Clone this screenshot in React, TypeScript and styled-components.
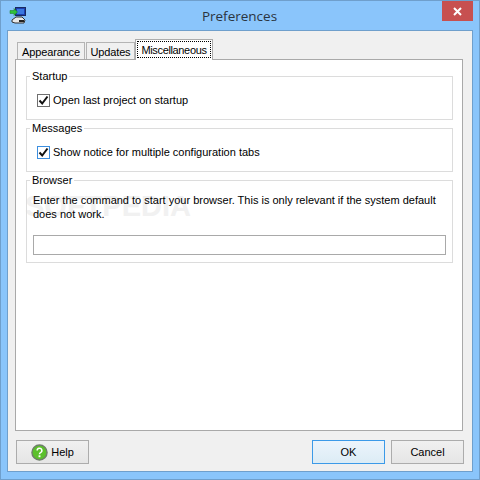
import styled, { createGlobalStyle } from "styled-components";

const GlobalStyle = createGlobalStyle`
  html, body {
    margin: 0;
    padding: 0;
    background: #8ac5fb;
  }
  * {
    box-sizing: border-box;
  }
`;

const FONT = `"Liberation Sans", Arial, sans-serif`;

const Window = styled.div`
  width: 480px;
  height: 480px;
  background: #8ac5fb;
  border: 1px solid #6f9fcc;
  display: flex;
  flex-direction: column;
  font-family: ${FONT};
  font-size: 11px;
  color: #000;
`;

const TitleBar = styled.div`
  height: 29px;
  flex: none;
  display: flex;
  align-items: flex-start;
  padding-left: 8px;
`;

const AppIcon = styled.svg`
  width: 18px;
  height: 18px;
  margin-top: 5px;
  flex: none;
`;

const Title = styled.div`
  flex: 1;
  text-align: center;
  font-family: "Open Sans", sans-serif;
  font-size: 13.5px;
  line-height: 30px;
  color: #2a3440;
  padding-left: 10px;
`;

const CloseButton = styled.div`
  width: 31px;
  height: 20px;
  margin-right: 6px;
  background: #c75050;
  display: flex;
  align-items: center;
  justify-content: center;
`;

const Client = styled.div`
  flex: 1;
  margin: 0 6px 7px 6px;
  background: #f0f0f0;
  border: 1px solid #6f9fcc;
  padding: 11px 8px 7px 7px;
  display: flex;
  flex-direction: column;
`;

const TabRow = styled.div`
  height: 17px;
  flex: none;
  display: flex;
  align-items: flex-end;
  padding-left: 2px;
  gap: 1px;
  position: relative;
  z-index: 1;
`;

const Tab = styled.div<{ $width: number }>`
  width: ${(p) => p.$width}px;
  height: 17px;
  border: 1px solid #b4b4b4;
  border-bottom: none;
  background: #f0f0f0;
  display: flex;
  align-items: center;
  justify-content: center;
  padding-top: 1px;
  letter-spacing: -0.15px;
`;

const ActiveTab = styled.div<{ $width: number }>`
  width: ${(p) => p.$width}px;
  height: 21px;
  margin: 0 0 -1px -1px;
  border: 1px solid #acacac;
  border-bottom: none;
  background: #fff;
  padding: 1px 1px 2px;
  display: flex;
`;

const FocusRect = styled.div`
  flex: 1;
  border: 1px dotted #000;
  display: flex;
  align-items: center;
  justify-content: center;
  letter-spacing: -0.35px;
`;

const Panel = styled.div`
  flex: 1;
  margin-right: 1px;
  background: #fff;
  border: 1px solid #a9a9a9;
  padding: 9px 9px 0 10px;
  display: flex;
  flex-direction: column;
  gap: 1px;
  position: relative;
`;

const Watermark = styled.div`
  position: absolute;
  left: 9px;
  top: 133px;
  font-size: 29px;
  font-weight: 700;
  line-height: 26px;
  color: #f1f1f1;
  z-index: 0;
`;

const Group = styled.fieldset<{ $height: number }>`
  height: ${(p) => p.$height}px;
  flex: none;
  margin: 0;
  padding: 0 6px;
  border: 1px solid #dcdcdc;
  min-width: 0;
  position: relative;
  z-index: 1;
`;

const GroupTitle = styled.legend`
  margin-left: -3px;
  padding: 0 2px;
  line-height: 14px;
`;

const CheckRow = styled.div`
  display: flex;
  align-items: center;
  gap: 3px;
  padding: 10px 0 0 4px;
  line-height: 15px;
`;

const CheckBox = styled.div<{ $focused?: boolean }>`
  width: 13px;
  height: 13px;
  flex: none;
  background: #fff;
  border: 1px solid ${(p) => (p.$focused ? "#3c8fe0" : "#6f6f6f")};
  display: flex;
  align-items: center;
  justify-content: center;
`;

const Description = styled.div`
  line-height: 14px;
  padding-top: 6px;
`;

const CommandInput = styled.div`
  height: 20px;
  margin-top: 14px;
  background: #fff;
  border: 1px solid #a9a9a9;
`;

const Footer = styled.div`
  flex: none;
  height: 24px;
  margin-top: 9px;
  display: flex;
  padding-left: 1px;
  gap: 6px;
`;

const Button = styled.div<{ $primary?: boolean }>`
  width: 73px;
  height: 24px;
  display: flex;
  align-items: center;
  justify-content: center;
  gap: 3px;
  border: 1px solid ${(p) => (p.$primary ? "#3c9ae8" : "#acacac")};
  background: ${(p) =>
    p.$primary
      ? "linear-gradient(#ecf4fc, #dcecf5)"
      : "linear-gradient(#f0f0f0, #e5e5e5)"};
`;

const Spacer = styled.div`
  flex: 1;
`;

const Check = () => (
  <svg width="11" height="11" viewBox="0 0 11 11">
    <path d="M1.5 5.5 L4.2 8.5 L9.5 1.5" fill="none" stroke="#111" strokeWidth="2" />
  </svg>
);

const App = () => {
  return (
    <>
      <GlobalStyle />
      <Window>
        <TitleBar>
          <AppIcon viewBox="0 0 18 18">
            <rect x="6.5" y="1.5" width="10" height="8" fill="#1b3fb0" stroke="#1a2a60" />
            <rect x="8" y="3" width="7" height="5" fill="#3a78e0" />
            <path d="M1 4.5h4V2.5L8.5 6 5 9.5V7.5H1z" fill="#2fc13a" stroke="#1a7a20" strokeWidth="0.5" />
            <path d="M3 14l4-3h6l3 3-1 3H6l-3-1z" fill="#e8e8e8" stroke="#333" />
            <rect x="10" y="14" width="5" height="2" fill="#222" />
          </AppIcon>
          <Title>Preferences</Title>
          <CloseButton>
            <svg width="9" height="9" viewBox="0 0 9 9">
              <path d="M1 1 L8 8 M8 1 L1 8" stroke="#fff" strokeWidth="2" />
            </svg>
          </CloseButton>
        </TitleBar>
        <Client>
          <TabRow>
            <Tab $width={68}>Appearance</Tab>
            <Tab $width={49}>Updates</Tab>
            <ActiveTab $width={78}>
              <FocusRect>Miscellaneous</FocusRect>
            </ActiveTab>
          </TabRow>
          <Panel>
            <Watermark>SOFTPEDIA</Watermark>
            <Group $height={51}>
              <GroupTitle>Startup</GroupTitle>
              <CheckRow>
                <CheckBox>
                  <Check />
                </CheckBox>
                Open last project on startup
              </CheckRow>
            </Group>
            <Group $height={51}>
              <GroupTitle>Messages</GroupTitle>
              <CheckRow>
                <CheckBox $focused>
                  <Check />
                </CheckBox>
                Show notice for multiple configuration tabs
              </CheckRow>
            </Group>
            <Group $height={90}>
              <GroupTitle>Browser</GroupTitle>
              <Description>
                Enter the command to start your browser. This is only relevant if the system default does not work.
              </Description>
              <CommandInput />
            </Group>
          </Panel>
          <Footer>
            <Button>
              <svg width="17" height="17" viewBox="0 0 18 18">
                <circle cx="9" cy="9" r="8" fill="#5cc02c" stroke="#6f7f6a" strokeWidth="1.5" />
                <path d="M6.5 7a2.5 2.5 0 1 1 3.6 2.2c-.8.4-1.1.8-1.1 1.6" fill="none" stroke="#fff" strokeWidth="1.6" />
                <rect x="8" y="12" width="2" height="2" fill="#fff" />
              </svg>
              Help
            </Button>
            <Spacer />
            <Button $primary>OK</Button>
            <Button>Cancel</Button>
          </Footer>
        </Client>
      </Window>
    </>
  );
};

export default App;
